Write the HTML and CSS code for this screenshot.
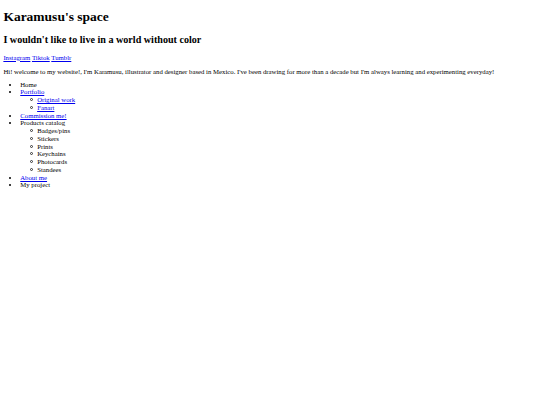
FILE: index.html
```html
<!DOCTYPE html>
<html lang="en">
<head>
    <meta charset="UTF-8">
    <meta name="viewport" content="width=device-width, initial-scale=1.0">
    <title>Karamusu's space</title>
    <link rel="stylesheet" href="styles.css">
</head>
<body>
    <h1>Karamusu's space</h1>
    <h2>I wouldn't like to live in a world without color</h2>

    <p class="socials">
        <a href="#">Instagram</a>
        <a href="#">Tiktok</a>
        <a href="#">Tumblr</a>
    </p>

    <p class="intro">Hi! welcome to my website!, I'm Karamusu, illustrator and designer based in Mexico. I've been drawing for more than a decade but I'm always learning and experimenting everyday!</p>

    <ul class="menu">
        <li>Home</li>
        <li><a href="#">Portfolio</a>
            <ul class="submenu">
                <li><a href="#">Original work</a></li>
                <li><a href="#">Fanart</a></li>
            </ul>
        </li>
        <li><a href="#">Commission me!</a></li>
        <li>Products catalog
            <ul class="submenu">
                <li>Badges/pins</li>
                <li>Stickers</li>
                <li>Prints</li>
                <li>Keychains</li>
                <li>Photocards</li>
                <li>Standees</li>
            </ul>
        </li>
        <li><a href="#">About me</a></li>
        <li>My project</li>
    </ul>
</body>
</html>
```

FILE: styles.css
```css
body {
    font-family: 'Liberation Serif', 'Times New Roman', serif;
    font-size: 6.75px;
    line-height: 1.15;
    margin: 3.375px;
    color: #000;
    background: #fff;
}
h1 {
    margin: 6px 0 6px;
}
h2 {
    margin: 9px 0 8px;
}
a {
    color: #0000ee;
}
.socials {
    margin-bottom: 5.75px;
}
.intro {
    margin-bottom: 4.75px;
}
.menu {
    margin-top: 4.75px;
    padding-left: 16.875px;
    list-style: disc;
}
.submenu {
    margin: 0;
    padding-left: 16.875px;
    list-style: none;
}
.submenu li::before {
    content: "";
    display: inline-block;
    box-sizing: border-box;
    width: 3px;
    height: 3px;
    margin-left: -7.5px;
    margin-right: 4.5px;
    border: 0.7px solid #333;
    border-radius: 50%;
    vertical-align: 1px;
}
```
